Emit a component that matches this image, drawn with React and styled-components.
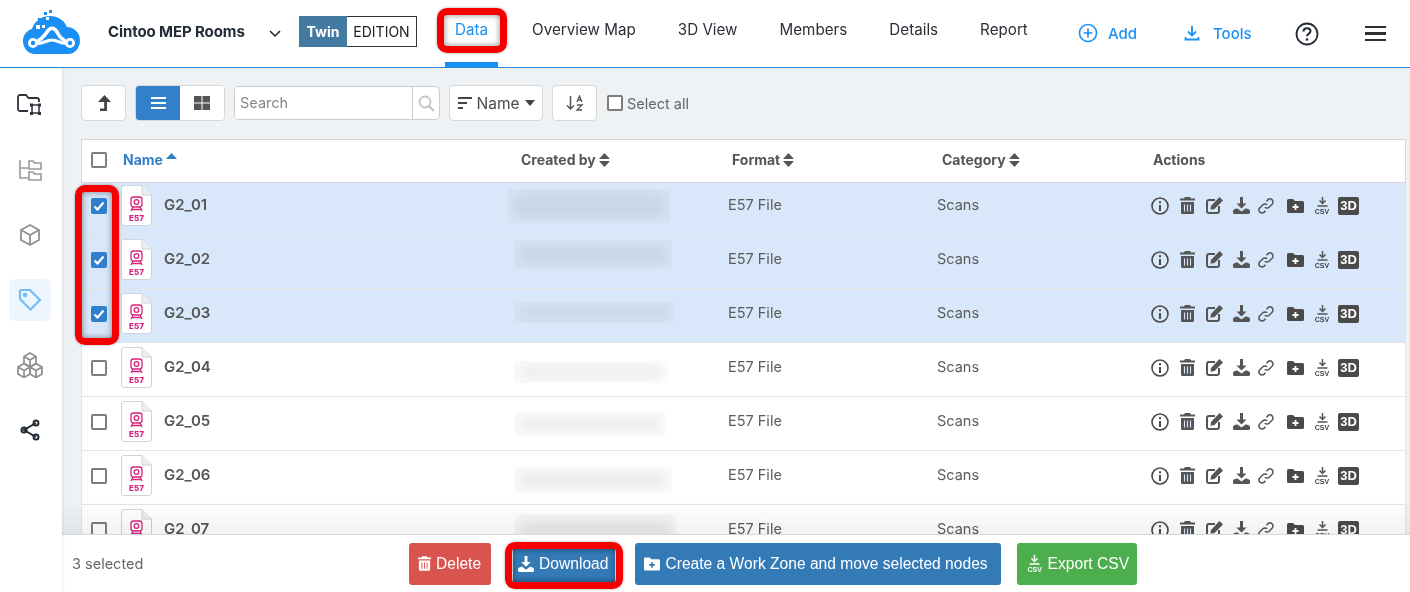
import styled, { createGlobalStyle } from "styled-components";
import { Fragment } from "react";

const rows = [
  { name: "G2_01", selected: true, blur: { x: -6, w: 162, h: 34, y: 0 } },
  { name: "G2_02", selected: true, blur: { x: 0, w: 158, h: 29, y: -5 } },
  { name: "G2_03", selected: true, blur: { x: 0, w: 160, h: 21, y: -1 } },
  { name: "G2_04", selected: false, blur: { x: 0, w: 154, h: 22, y: 4 } },
  { name: "G2_05", selected: false, blur: { x: 0, w: 152, h: 24, y: 2 } },
  { name: "G2_06", selected: false, blur: { x: 0, w: 158, h: 26, y: 4 } },
  { name: "G2_07", selected: false, blur: { x: 0, w: 162, h: 32, y: 0 } },
];

const Logo = () => (
  <svg width="60" height="46" viewBox="0 0 60 46">
    <path fill="#1a90f5" d="M13 44C6 44 1 38 1 31c0-6 4-11 9-12 2-7 9-13 18-13 8 0 14 4 17 11 7 0 13 6 13 13 0 8-5 14-12 14z" />
    <path fill="none" stroke="#fff" strokeWidth="3.600" d="M12 33c5-2 9-5 13-11 3-5 7-5 10 0 3 6 7 9 12 11" />
    <path fill="none" stroke="#fff" strokeWidth="3.200" d="M14 33c6 2 10-3 16-3s10 5 17 3" />
    <circle cx="11" cy="33" r="3.600" fill="#1a90f5" stroke="#fff" strokeWidth="2.800" />
    <circle cx="48" cy="33" r="3.600" fill="#1a90f5" stroke="#fff" strokeWidth="2.800" />
    <g fill="#1a90f5">
      <rect x="16" y="8" width="4" height="4" />
      <rect x="22" y="2" width="3" height="3" />
      <rect x="27" y="0" width="3" height="3" />
    </g>
    <g fill="#fff">
      <rect x="24" y="7" width="3" height="3" />
      <rect x="14" y="15" width="4" height="4" />
      <rect x="20" y="15" width="3" height="3" />
    </g>
  </svg>
);

const FileIcon = () => (
  <svg width="31" height="41" viewBox="0 0 31 41">
    <path fill="#fff" stroke="#cfd3da" strokeWidth="1" d="M3 .5h18L30.500 10v28a2.500 2.500 0 0 1-2.500 2.500H3A2.500 2.500 0 0 1 .5 38V3A2.500 2.500 0 0 1 3 .5z" />
    <path fill="#eceef1" stroke="#cfd3da" strokeWidth="1" d="M21 .5V10h9.500" />
    <g fill="none" stroke="#d6247f" strokeWidth="1.300">
      <rect x="10" y="12" width="11" height="10" rx="2.500" />
      <circle cx="15.500" cy="17" r="2.300" />
      <path d="M12 22l-2 4M19 22l2 4M11 24.500h9" />
    </g>
    <text x="15.500" y="36" textAnchor="middle" fontFamily="Inter, sans-serif" fontWeight="800" fontSize="8" fill="#d6247f">E57</text>
  </svg>
);

const Check = ({ on }) => (
  <CheckBox $on={on}>
    {on && (
      <svg width="12" height="10" viewBox="0 0 12 10">
        <path d="M1.500 5.500l3 3 6-7" fill="none" stroke="#fff" strokeWidth="2.200" />
      </svg>
    )}
  </CheckBox>
);

const Sort = () => (
  <svg width="11" height="14" viewBox="0 0 11 14">
    <path d="M5.500 0L11 6H0zM5.500 14L0 8h11z" fill="#555" />
  </svg>
);

const Actions = () => (
  <ActionRow>
    <svg width="18" height="18" viewBox="0 0 18 18">
      <circle cx="9" cy="9" r="8" fill="none" stroke="#4a4a4a" strokeWidth="1.600" />
      <path d="M9 4.200v2M9 8v6" stroke="#4a4a4a" strokeWidth="2" />
    </svg>
    <svg width="15" height="17" viewBox="0 0 15 17">
      <path fill="#555" d="M5 0h5l1 1.500h4V3.500H0V1.500h4zM1 5h13v10.500a1.500 1.500 0 0 1-1.500 1.500h-10A1.500 1.500 0 0 1 1 15.500z" />
      <path stroke="#d8e7fa" strokeWidth="1.100" d="M4.500 7.500v7M7.500 7.500v7M10.500 7.500v7" />
    </svg>
    <svg width="17" height="17" viewBox="0 0 17 17">
      <path fill="none" stroke="#555" strokeWidth="2" d="M9 3H3a2 2 0 0 0-2 2v9a2 2 0 0 0 2 2h8a2 2 0 0 0 2-2V9" />
      <path fill="#555" d="M13.500 0L17 3.500 8.500 12 4.500 12.800 5 9z" />
    </svg>
    <svg width="17" height="17" viewBox="0 0 17 17">
      <path fill="#555" d="M7 0h3v6.500h3.500L8.500 11.500 3.500 6.500H7zM0 13.500C1 12 3 11.500 4.500 11.500l4 3 4-3c1.500 0 3.500.5 4.500 2V15.500a1.500 1.500 0 0 1-1.500 1.500h-14A1.500 1.500 0 0 1 0 15.500z" />
    </svg>
    <svg width="16" height="16" viewBox="0 0 16 16">
      <g fill="none" stroke="#555" strokeWidth="1.500">
        <path d="M6.800 9.200a3 3 0 0 0 4.300 0l3-3a3 3 0 0 0-4.300-4.300L8.500 3.200" />
        <path d="M9.200 6.800a3 3 0 0 0-4.300 0l-3 3a3 3 0 0 0 4.300 4.300l1.300-1.300" />
      </g>
    </svg>
    <svg width="17" height="14" viewBox="0 0 17 14">
      <path fill="#4a4a4a" d="M0 1.500A1.500 1.500 0 0 1 1.500 0H6l2 2h7.500A1.500 1.500 0 0 1 17 3.500v9a1.500 1.500 0 0 1-1.500 1.500h-14A1.500 1.500 0 0 1 0 12.500z" />
      <path stroke="#fff" strokeWidth="1.800" d="M8.500 5v6M5.500 8h6" />
    </svg>
    <CsvIcon>
      <svg width="11" height="10" viewBox="0 0 11 10">
        <path fill="none" stroke="#555" strokeWidth="1.500" d="M5.500 0v6M2.500 3.500l3 3 3-3M.5 9h10" />
      </svg>
      <span>CSV</span>
    </CsvIcon>
    <Badge3d>3D</Badge3d>
  </ActionRow>
);

const App = () => {
  return (
    <Fragment>
      <Global />
      <Page>
        <Header>
          <LogoBox>
            <Logo />
          </LogoBox>
          <Project>Cintoo MEP Rooms</Project>
          <svg width="12" height="8" viewBox="0 0 12 8">
            <path d="M1 1l5 5 5-5" fill="none" stroke="#222" strokeWidth="1.500" />
          </svg>
          <Edition>
            <b>Twin</b>
            <span>EDITION</span>
          </Edition>
          <Nav>
            <NavItem $active>Data</NavItem>
            <NavItem>Overview Map</NavItem>
            <NavItem>3D View</NavItem>
            <NavItem>Members</NavItem>
            <NavItem>Details</NavItem>
            <NavItem>Report</NavItem>
          </Nav>
          <HeaderAction $w="106px">
            <svg width="20" height="20" viewBox="0 0 20 20">
              <circle cx="10" cy="10" r="8.500" fill="none" stroke="#1a90f5" strokeWidth="1.600" />
              <path d="M10 5.500v9M5.500 10h9" stroke="#1a90f5" strokeWidth="1.600" />
            </svg>
            Add
          </HeaderAction>
          <HeaderAction $w="108px" $gap="13px">
            <svg width="16" height="16" viewBox="0 0 16 16">
              <path d="M8 1v9M4 6.500L8 10.500l4-4M1.500 12v2.500h13V12" fill="none" stroke="#1a90f5" strokeWidth="1.800" />
            </svg>
            Tools
          </HeaderAction>
          <HelpIcon>
            <svg width="24" height="24" viewBox="0 0 24 24">
              <circle cx="12" cy="12" r="10.500" fill="none" stroke="#222b36" strokeWidth="1.800" />
              <path d="M8.500 9.500C8.500 7.500 10 6.300 12 6.300s3.500 1.200 3.500 3c0 2.700-3.500 2.500-3.500 5" fill="none" stroke="#222b36" strokeWidth="2" />
              <circle cx="12" cy="17.500" r="1.300" fill="#222b36" />
            </svg>
          </HelpIcon>
          <Burger>
            <i />
            <i />
            <i />
          </Burger>
        </Header>
        <Body>
          <Sidebar>
            <SideIcon>
              <svg width="26" height="24" viewBox="0 0 26 24" fill="none" stroke="#2c333c" strokeWidth="1.800">
                <path d="M11 18H3a2 2 0 0 1-2-2V4a2 2 0 0 1 2-2h6l2.500 3H20a2 2 0 0 1 2 2v2" />
                <path d="M14 12h9M14 20h9M15 11v10M22 11v10" strokeWidth="1.500" />
                <g fill="#2c333c" stroke="none">
                  <rect x="13" y="10.500" width="3" height="3" />
                  <rect x="21" y="10.500" width="3" height="3" />
                  <rect x="13" y="19" width="3" height="3" />
                  <rect x="21" y="19" width="3" height="3" />
                </g>
              </svg>
            </SideIcon>
            <SideIcon>
              <svg width="24" height="24" viewBox="0 0 24 24" fill="none" stroke="#9a9a9a" strokeWidth="1.600">
                <path d="M2 2v18h8M2 10h8" />
                <path d="M11 3h4l1.500 2H23v6H11zM11 14h4l1.500 2H23v6H11z" />
              </svg>
            </SideIcon>
            <SideIcon>
              <svg width="22" height="24" viewBox="0 0 22 24" fill="none" stroke="#8f8f8f" strokeWidth="1.800">
                <path d="M11 2l9 5v10l-9 5-9-5V7zM2 7l9 5 9-5M11 12v10" />
              </svg>
            </SideIcon>
            <SideIcon $active>
              <svg width="24" height="24" viewBox="0 0 24 24" fill="none" stroke="#74bdf6" strokeWidth="2.200">
                <path d="M2 3.500A1.500 1.500 0 0 1 3.500 2H12l10 10-9.500 9.500L2 11z" />
                <circle cx="7" cy="7" r="1.200" />
              </svg>
            </SideIcon>
            <SideIcon>
              <svg width="28" height="26" viewBox="0 0 28 26" fill="none" stroke="#8f8f8f" strokeWidth="1.700">
                <path d="M14 1l6 3.500v7L14 15l-6-3.500v-7zM8 4.500l6 3.500 6-3.500M14 8v7" />
                <path d="M8 11.500l6 3.500v7l-6 3.500L2 22v-7zM2 15l6 3.500 6-3.500M8 18.500v7" />
                <path d="M20 11.500l6 3.500v7l-6 3.500-6-3.500v-7zM14 15l6 3.500 6-3.500M20 18.500v7" />
              </svg>
            </SideIcon>
            <SideIcon>
              <svg width="22" height="24" viewBox="0 0 22 24" fill="none" stroke="#222b36" strokeWidth="2">
                <path d="M17 5L5 12l12 7" />
                <circle cx="17" cy="5" r="2.500" />
                <circle cx="5" cy="12" r="2.500" />
                <circle cx="17" cy="19" r="2.500" />
              </svg>
            </SideIcon>
          </Sidebar>
          <Main>
            <Content>
              <Toolbar>
                <ToolButton $w="45px">
                  <svg width="14" height="16" viewBox="0 0 14 16">
                    <path fill="#444" d="M7.500 0L14 7H10v9H3v-2.500h4.200V7H1z" />
                  </svg>
                </ToolButton>
                <ViewSwitch>
                  <ViewButton $active>
                    <svg width="15" height="12" viewBox="0 0 15 12">
                      <path d="M0 1h15M0 6h15M0 11h15" stroke="#fff" strokeWidth="1.800" />
                    </svg>
                  </ViewButton>
                  <ViewButton>
                    <svg width="16" height="14" viewBox="0 0 16 14">
                      <path fill="#555" d="M0 0h7.500v6.500H0zM8.500 0H16v6.500H8.500zM0 7.500h7.500V14H0zM8.500 7.500H16V14H8.500z" />
                    </svg>
                  </ViewButton>
                </ViewSwitch>
                <SearchBox>
                  <input placeholder="Search" />
                  <span>
                    <svg width="17" height="17" viewBox="0 0 17 17" fill="none" stroke="#c4c4c4" strokeWidth="1.800">
                      <circle cx="7" cy="7" r="5.500" />
                      <path d="M11 11l5 5" strokeWidth="2.200" />
                    </svg>
                  </span>
                </SearchBox>
                <SortSelect>
                  <svg width="14" height="12" viewBox="0 0 14 12">
                    <path d="M0 1h14M0 6h9M0 11h5" stroke="#444" strokeWidth="1.800" />
                  </svg>
                  Name
                  <svg width="10" height="6" viewBox="0 0 10 6">
                    <path d="M0 0h10L5 6z" fill="#444" />
                  </svg>
                </SortSelect>
                <ToolButton $w="45px">
                  <svg width="18" height="16" viewBox="0 0 18 16" fill="none" stroke="#555" strokeWidth="1.500">
                    <path d="M4.500 1v13M1 10.500l3.500 3.500L8 10.500" />
                    <path d="M11 7l2.500-6L16 7M11.800 5h3.400M11 10h5l-5 5h5" strokeWidth="1.300" />
                  </svg>
                </ToolButton>
                <SelectAll>
                  <Check />
                  Select all
                </SelectAll>
              </Toolbar>
              <Table>
                <HeadRow>
                  <Cell $w="32px">
                    <Check />
                  </Cell>
                  <HeadName $w="398px">
                    Name
                    <svg width="11" height="6" viewBox="0 0 11 6">
                      <path d="M5.500 0L11 6H0z" fill="#3380c8" />
                    </svg>
                  </HeadName>
                  <HeadCell $w="211px">
                    Created by <Sort />
                  </HeadCell>
                  <HeadCell $w="210px">
                    Format <Sort />
                  </HeadCell>
                  <HeadCell $w="211px">
                    Category <Sort />
                  </HeadCell>
                  <HeadCell $w="auto">Actions</HeadCell>
                </HeadRow>
                {rows.map((row) => (
                  <Row key={row.name} $selected={row.selected}>
                    <Cell $w="30px">
                      <Check on={row.selected} />
                    </Cell>
                    <Cell $w="43px">
                      <FileIcon />
                    </Cell>
                    <FileName>{row.name}</FileName>
                    <BlurCell>
                      <Blurred $selected={row.selected} $blur={row.blur} />
                    </BlurCell>
                    <TextCell $w="209px">E57 File</TextCell>
                    <TextCell $w="214px">Scans</TextCell>
                    <Actions />
                  </Row>
                ))}
              </Table>
              <Fade />
            </Content>
            <Footer>
              <Count>3 selected</Count>
              <FooterButtons>
                <FooterButton $bg="#d9534f" $pad="0 10px 0 9px">
                  <svg width="13" height="15" viewBox="0 0 15 17">
                    <path fill="#fff" d="M5 0h5l1 1.500h4V3.500H0V1.500h4zM1 5h13v10.500a1.500 1.500 0 0 1-1.500 1.500h-10A1.500 1.500 0 0 1 1 15.500z" />
                    <path stroke="#d9534f" strokeWidth="1.100" d="M4.500 7.500v7M7.500 7.500v7M10.500 7.500v7" />
                  </svg>
                  Delete
                </FooterButton>
                <FooterButton $bg="#337ab7" $ml="22px" $pad="0 7px 0 5px">
                  <svg width="16" height="16" viewBox="0 0 17 17">
                    <path fill="#fff" d="M7 0h3v6.500h3.500L8.500 11.500 3.500 6.500H7zM0 13.500C1 12 3 11.500 4.500 11.500l4 3 4-3c1.500 0 3.500.5 4.500 2V15.500a1.500 1.500 0 0 1-1.500 1.500h-14A1.500 1.500 0 0 1 0 15.500z" />
                  </svg>
                  Download
                </FooterButton>
                <FooterButton $bg="#337ab7" $ml="20px" $pad="0 13px 0 9px">
                  <svg width="16" height="14" viewBox="0 0 17 14">
                    <path fill="#fff" d="M0 1.500A1.500 1.500 0 0 1 1.500 0H6l2 2h7.500A1.500 1.500 0 0 1 17 3.500v9a1.500 1.500 0 0 1-1.500 1.500h-14A1.500 1.500 0 0 1 0 12.500z" />
                    <path stroke="#337ab7" strokeWidth="1.800" d="M8.500 5v6M5.500 8h6" />
                  </svg>
                  Create a Work Zone and move selected nodes
                </FooterButton>
                <FooterButton $bg="#4cae4c" $ml="16px" $pad="0 8px 0 10px">
                  <CsvIcon $light>
                    <svg width="11" height="10" viewBox="0 0 11 10">
                      <path fill="none" stroke="#fff" strokeWidth="1.500" d="M5.500 0v6M2.500 3.500l3 3 3-3M.5 9h10" />
                    </svg>
                    <span>CSV</span>
                  </CsvIcon>
                  Export CSV
                </FooterButton>
              </FooterButtons>
            </Footer>
          </Main>
          <RedCheckMark />
          <RedDownloadMark />
        </Body>
        <RedDataMark />
      </Page>
    </Fragment>
  );
};

const Global = createGlobalStyle`
    html, body {
        margin: 0;
        padding: 0;
        height: 100%;
        overflow: hidden;
        background: #fff;
    }
    * {
        box-sizing: border-box;
    }
`;

const Page = styled.div`
    position: relative;
    height: 592px;
    display: flex;
    flex-direction: column;
    font-family: Inter, "Noto Sans", sans-serif;
`;

const Header = styled.div`
    height: 68px;
    flex: none;
    display: flex;
    align-items: center;
    background: #fff;
    border-bottom: 1px solid #2a8bdc;
    color: #222b36;
`;

const LogoBox = styled.div`
    width: 108px;
    padding-left: 22px;
    display: flex;
    margin-top: -2px;
`;

const Project = styled.div`
    width: 161px;
    font-size: 15px;
    font-weight: 700;
    letter-spacing: -0.1px;
    margin-top: -4px;
    white-space: nowrap;
`;

const Edition = styled.div`
    display: flex;
    width: 118px;
    height: 31px;
    margin-left: 18px;
    margin-top: -5px;
    border: 1px solid #333;
    font-size: 14px;
    align-items: stretch;

    b {
        width: 48px;
        margin: -1px 0 -1px -1px;
        background: #4479a2;
        color: #fff;
        font-weight: 700;
        display: flex;
        align-items: center;
        justify-content: center;
    }
    span {
        flex: 1;
        display: flex;
        align-items: center;
        justify-content: center;
        color: #222;
    }
`;

const Nav = styled.div`
    display: flex;
    margin-left: 28px;
    height: 67px;
    gap: 42px;
    font-size: 15.200px;
    width: 633px;
`;

const NavItem = styled.div`
    height: 100%;
    display: flex;
    align-items: center;
    padding: 0 ${(p) => (p.$active ? "10px" : "0")} ${(p) => (p.$active ? "3px" : "8px")};
    margin-right: ${(p) => (p.$active ? "-8px" : "0")};
    color: ${(p) => (p.$active ? "#1a90f5" : "#2b2f36")};
    border-bottom: ${(p) => (p.$active ? "5px solid #1a90f5" : "0")};
    white-space: nowrap;
`;

const HeaderAction = styled.div`
    width: ${(p) => p.$w};
    display: flex;
    align-items: center;
    gap: ${(p) => p.$gap || "10px"};
    color: #1a90f5;
    font-size: 15px;
    font-weight: 500;
    margin-top: -1px;
`;

const HelpIcon = styled.div`
    display: flex;
    margin-left: 3px;
`;

const Burger = styled.div`
    margin-left: 46px;
    display: flex;
    flex-direction: column;
    gap: 4px;
    width: 21px;

    i {
        display: block;
        height: 2.500px;
        background: #2b2f36;
    }
`;

const Body = styled.div`
    position: relative;
    flex: 1;
    display: flex;
    min-height: 0;
`;

const Sidebar = styled.div`
    width: 62px;
    flex: none;
    background: #fff;
    display: flex;
    flex-direction: column;
    align-items: center;
    padding: 16px 2px 0 0;
    gap: 23px;
    box-shadow: 1px 0 3px rgba(0, 0, 0, 0.08);
    z-index: 1;
`;

const SideIcon = styled.div`
    width: 42px;
    height: 42px;
    display: flex;
    align-items: center;
    justify-content: center;
    border-radius: 6px;
    background: ${(p) => (p.$active ? "#edf6fe" : "transparent")};
`;

const Main = styled.div`
    flex: 1;
    min-width: 0;
    display: flex;
    flex-direction: column;
`;

const Content = styled.div`
    position: relative;
    flex: 1;
    min-height: 0;
    overflow: hidden;
    background: #eef2f5;
    padding: 17px 4px 0 19px;
`;

const Toolbar = styled.div`
    display: flex;
    align-items: center;
    gap: 9px;
    height: 36px;
`;

const ToolButton = styled.div`
    width: ${(p) => p.$w};
    height: 36px;
    display: flex;
    align-items: center;
    justify-content: center;
    background: #fff;
    border: 1px solid #d8d8d8;
    border-radius: 4px;
`;

const ViewSwitch = styled.div`
    display: flex;
    width: 90px;
    height: 36px;
    border-radius: 4px;
    overflow: hidden;
    border: 1px solid #d8d8d8;
    background: #fff;
`;

const ViewButton = styled.div`
    flex: 1;
    display: flex;
    align-items: center;
    justify-content: center;
    background: ${(p) => (p.$active ? "#337fc9" : "#fff")};
`;

const SearchBox = styled.div`
    width: 206px;
    height: 34px;
    display: flex;
    background: #fff;
    border: 1px solid #ccc;
    border-radius: 5px;
    overflow: hidden;

    input {
        flex: 1;
        min-width: 0;
        border: 0;
        outline: 0;
        padding: 0 5px 2px;
        font-family: Inter, sans-serif;
        font-size: 14.500px;
        color: #555;
    }
    input::placeholder {
        color: #888;
    }
    span {
        width: 27px;
        display: flex;
        align-items: center;
        justify-content: center;
        border-left: 1px solid #ccc;
    }
`;

const SortSelect = styled.div`
    width: 94px;
    height: 36px;
    display: flex;
    align-items: center;
    gap: 5px;
    justify-content: center;
    background: #fff;
    border: 1px solid #d8d8d8;
    border-radius: 4px;
    font-size: 15.500px;
    color: #4a4a4a;
`;

const SelectAll = styled.div`
    display: flex;
    align-items: center;
    gap: 4px;
    margin-left: 1px;
    font-size: 14.500px;
    color: #666;
`;

const CheckBox = styled.span`
    width: 16px;
    height: 16px;
    flex: none;
    display: inline-flex;
    align-items: center;
    justify-content: center;
    border-radius: 2px;
    border: ${(p) => (p.$on ? "0" : "2px solid #7d7d7d")};
    background: ${(p) => (p.$on ? "#2f7fcb" : "#fff")};
`;

const Table = styled.div`
    margin-top: 18px;
    width: 1325px;
`;

const HeadRow = styled.div`
    height: 44px;
    display: flex;
    align-items: center;
    background: #fff;
    border: 1px solid #d6d6d6;
    padding-left: 9px;
    padding-bottom: 3px;
    font-size: 14px;
    font-weight: 700;
    color: #555;
`;

const Cell = styled.div`
    width: ${(p) => p.$w};
    flex: none;
    display: flex;
    align-items: center;
`;

const HeadCell = styled(Cell)`
    gap: 3px;
    white-space: nowrap;
`;

const HeadName = styled(HeadCell)`
    color: #337fc9;
    padding-bottom: 1px;

    svg {
        margin-top: -6px;
    }
`;

const Row = styled.div`
    height: 54px;
    display: flex;
    align-items: center;
    padding: 0 0 4px 9px;
    border: 1px solid #e4e4e4;
    border-top: 0;
    background: ${(p) => (p.$selected ? "#d8e7fa" : "#fff")};
    color: #555;

    &:nth-child(2) {
        height: 52px;
        padding-bottom: 6px;
    }
`;

const FileName = styled.div`
    width: 350px;
    flex: none;
    padding-bottom: 2px;
    font-size: 15px;
    font-weight: 600;
    color: #555;
`;

const BlurCell = styled.div`
    width: 214px;
    height: 0;
    flex: none;
    display: flex;
    align-items: center;
`;

const Blurred = styled.div`
    position: relative;
    flex: none;
    overflow: hidden;
    width: ${(p) => p.$blur.w}px;
    height: ${(p) => p.$blur.h}px;
    margin-left: ${(p) => p.$blur.x}px;
    margin-top: ${(p) => p.$blur.y * 2}px;
    background: ${(p) => (p.$selected ? "#d5e3f4" : "#fbfbfb")};

    &::after {
        content: "";
        position: absolute;
        inset: 6px;
        background: ${(p) => (p.$selected ? "#c6d5e7" : "#e9e9e9")};
        filter: blur(6px);
    }
`;

const TextCell = styled.div`
    width: ${(p) => p.$w};
    flex: none;
    padding-bottom: 2px;
    font-size: 14.500px;
    color: #5c5c5c;
`;

const ActionRow = styled.div`
    display: flex;
    align-items: center;
    color: #555;

    > :nth-child(2),
    > :nth-child(3) {
        margin-left: 11px;
    }
    > :nth-child(4),
    > :nth-child(7) {
        margin-left: 10px;
    }
    > :nth-child(5),
    > :nth-child(8) {
        margin-left: 8px;
    }
    > :nth-child(6) {
        margin-left: 13px;
    }
`;

const CsvIcon = styled.div`
    display: inline-flex;
    flex-direction: column;
    align-items: center;
    width: 16px;
    gap: 1px;
    color: ${(p) => (p.$light ? "#fff" : "#444")};

    span {
        font-size: 7px;
        line-height: 7px;
        font-weight: 600;
        font-family: "Liberation Sans", sans-serif;
    }
`;

const Badge3d = styled.div`
    width: 21px;
    height: 18px;
    display: flex;
    align-items: center;
    justify-content: center;
    border-radius: 2px;
    background: #4a4a4a;
    color: #fff;
    font-size: 13px;
    font-weight: 700;
    font-family: "Liberation Sans", sans-serif;
`;

const Fade = styled.div`
    position: absolute;
    left: 0;
    right: 0;
    bottom: 0;
    height: 34px;
    background: linear-gradient(to bottom, #fff, #f2f2f2);
    mix-blend-mode: multiply;
    pointer-events: none;
`;

const Footer = styled.div`
    height: 58px;
    flex: none;
    display: flex;
    align-items: center;
    background: #fff;
    border-top: 1px solid #d8d8d8;
`;

const Count = styled.div`
    width: 347px;
    padding-left: 10px;
    font-size: 14.500px;
    color: #666;
`;

const FooterButtons = styled.div`
    display: flex;
    align-items: center;
`;

const FooterButton = styled.div`
    height: 42px;
    display: flex;
    align-items: center;
    gap: 5px;
    padding: ${(p) => p.$pad};
    margin-left: ${(p) => p.$ml || "0"};
    background: ${(p) => p.$bg};
    border-radius: 3px;
    color: #fff;
    font-size: 15.600px;
    font-family: "Liberation Sans", sans-serif;
    white-space: nowrap;
`;

const RedMark = styled.div`
    position: absolute;
    border: 7px solid #f50000;
    border-radius: 10px;
    box-shadow: inset 0 0 6px rgba(0, 0, 0, 0.45), 0 0 3px rgba(0, 0, 0, 0.35);
    pointer-events: none;
    z-index: 3;
`;

const RedDataMark = styled(RedMark)`
    left: 437px;
    top: 8px;
    width: 70px;
    height: 45px;
`;

const RedCheckMark = styled(RedMark)`
    left: 75px;
    top: 117px;
    width: 44px;
    height: 160px;
`;

const RedDownloadMark = styled(RedMark)`
    left: 505px;
    top: 474px;
    width: 118px;
    height: 47px;
`;

export default App;
